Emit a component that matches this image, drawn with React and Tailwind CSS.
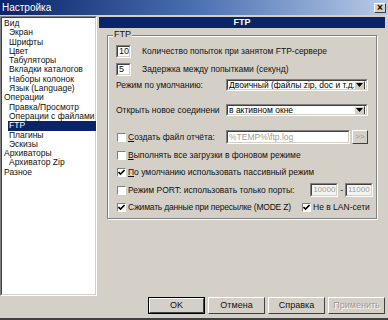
import React from 'react';

const font = { fontFamily: '"Liberation Sans", Arial, "DejaVu Sans", sans-serif' };

const tree = [
  ['Вид', 0],
  ['Экран', 1],
  ['Шрифты', 1],
  ['Цвет', 1],
  ['Табуляторы', 1],
  ['Вкладки каталогов', 1],
  ['Наборы колонок', 1],
  ['Язык (Language)', 1],
  ['Операции', 0],
  ['Правка/Просмотр', 1],
  ['Операции с файлами', 1],
  ['FTP', 1, true],
  ['Плагины', 1],
  ['Эскизы', 1],
  ['Архиваторы', 0],
  ['Архиватор Zip', 1],
  ['Разное', 0],
];

// поле ввода с "вдавленной" рамкой
const Field = ({ className = '', children }) => (
  <div className={`border border-t-[#808080] border-l-[#808080] border-b-white border-r-white ${className}`}>
    <div className="h-full w-full border border-t-[#404040] border-l-[#404040] border-b-[#d4d0c8] border-r-[#d4d0c8] flex items-center px-[1px] overflow-hidden whitespace-nowrap">
      {children}
    </div>
  </div>
);

const Check = ({ checked }) => (
  <div className="w-[9px] h-[9px] shrink-0 bg-white border border-t-[#808080] border-l-[#808080] border-b-white border-r-white flex items-center justify-center">
    {checked && (
      <svg width="7" height="7" viewBox="0 0 7 7">
        <path d="M0.5 3 L2.5 5 L6.5 1" stroke="#000" strokeWidth="1.6" fill="none" />
      </svg>
    )}
  </div>
);

const Raised = ({ className = '', children }) => (
  <div className={`bg-[#d4d0c8] border border-t-white border-l-white border-b-[#404040] border-r-[#404040] flex items-center justify-center ${className}`}>
    {children}
  </div>
);

const Select = ({ text }) => (
  <Field className="w-[142px] h-[12px] bg-white">
    <span className="flex-1 min-w-0 text-[8.5px] leading-none text-black overflow-hidden whitespace-nowrap">{text}</span>
    <Raised className="w-[11px] h-[9px] shrink-0">
      <svg width="7" height="4" viewBox="0 0 7 4">
        <path d="M0 0 H7 L3.5 4 Z" fill="#000" />
      </svg>
    </Raised>
  </Field>
);

const Button = ({ children, def, disabled }) => (
  <div className={`w-[57px] h-[17px] ${def ? 'border border-black' : ''}`}>
    <Raised className="w-full h-full">
      <span className={`text-[9px] ${disabled ? 'text-[#9a978f] [text-shadow:1px_1px_0_#fff]' : 'text-[#111]'}`}>{children}</span>
    </Raised>
  </div>
);

export default function App() {
  return (
    <div className="w-[388px] h-[320px] bg-[#d4d0c8] flex flex-col overflow-hidden" style={font}>
      {/* заголовок окна */}
      <div className="h-[15px] shrink-0 bg-gradient-to-r from-[#0a246a] via-[#4a70b0] to-[#b8cbe8] flex items-center pl-[2px] pr-[2px]">
        <span className="text-white text-[10px] flex-1">Настройка</span>
        <Raised className="w-[12px] h-[10px]">
          <span className="text-[10px] leading-none font-bold text-black">×</span>
        </Raised>
      </div>

      <div className="flex flex-1 min-h-0">
        {/* дерево разделов */}
        <div className="w-[97px] shrink-0 pb-[22px] pt-[1px]">
          <div className="h-full border border-t-[#808080] border-l-[#808080] border-b-white border-r-white">
            <div className="h-full bg-white border border-t-[#404040] border-l-[#404040] border-b-[#d4d0c8] border-r-[#d4d0c8] pt-[1px] pl-[1px] pr-[1px]">
              {tree.map(([t, lvl, sel]) => (
                <div key={t} className={`h-[9.3px] leading-[9.3px] text-[8.5px] whitespace-nowrap ${lvl ? 'pl-[6px]' : 'pl-[1px]'}`}>
                  <span className={sel ? 'bg-[#0a246a] text-white inline-block w-[88px] pl-[1px] -ml-[1px]' : 'text-[#111]'}>{t}</span>
                </div>
              ))}
            </div>
          </div>
        </div>

        {/* правая панель */}
        <div className="flex-1 flex flex-col pl-[2px] pr-[3px] pb-[3px]">
          <div className="h-[11px] mt-[2px] bg-[#0a246a] flex items-center justify-center">
            <span className="text-white text-[9px] font-bold">FTP</span>
          </div>

          <div className="relative ml-[8px] mr-[8px] mt-[7px] h-[184px] border border-[#808080] shadow-[1px_1px_0_#fff,inset_1px_1px_0_#fff]">
            <span className="absolute -top-[6px] left-[5px] bg-[#d4d0c8] px-[1px] text-[9px] leading-none text-[#111]">FTP</span>

            <div className="flex flex-col pl-[8px] pr-[3px] text-[8.5px] text-[#111]">
              <div className="flex items-center h-[13px] mt-[9px]">
                <Field className="w-[15px] h-[13px] bg-white"><span className="text-[9px]">10</span></Field>
                <span className="ml-[11px]">Количество попыток при занятом FTP-сервере</span>
              </div>
              <div className="flex items-center h-[13px] mt-[5px]">
                <Field className="w-[15px] h-[13px] bg-white"><span className="text-[9px]">5</span></Field>
                <span className="ml-[11px]">Задержка между попытками (секунд)</span>
              </div>
              <div className="flex items-center h-[12px] mt-[3px]">
                <span className="w-[110px] whitespace-nowrap">Режим по умолчанию:</span>
                <Select text="Двоичный (файлы zip, doc и т.д.)" />
              </div>
              <div className="flex items-center h-[12px] mt-[13px]">
                <span className="w-[110px] shrink-0 whitespace-nowrap overflow-hidden">Открыть новое соединени</span>
                <Select text="в активном окне" />
              </div>
              <div className="flex items-center h-[14px] mt-[14px]">
                <div className="w-[110px] flex items-center pl-[1px]">
                  <Check />
                  <span className="ml-[2px]"><u>С</u>оздать файл отчёта:</span>
                </div>
                <Field className="w-[124px] h-[14px] bg-white"><span className="text-[8.5px] text-[#a09d96]">%TEMP%\ftp.log</span></Field>
                <Raised className="w-[16px] h-[14px] ml-[2px]">
                  <span className="text-[8px] text-[#9a978f]">&gt;&gt;</span>
                </Raised>
              </div>
              <div className="flex items-center h-[12px] mt-[5px] pl-[1px]">
                <Check />
                <span className="ml-[2px]"><u>В</u>ыполнять все загрузки в фоновом режиме</span>
              </div>
              <div className="flex items-center h-[12px] mt-[5px] pl-[1px]">
                <Check checked />
                <span className="ml-[2px]"><u>П</u>о умолчанию использовать пассивный режим</span>
              </div>
              <div className="flex items-center h-[14px] mt-[5px] pl-[1px]">
                <Check />
                <span className="ml-[2px] flex-1">Режим PORT: использовать только порты:</span>
                <Field className="w-[28px] h-[14px] bg-[#f4f3f0]"><span className="text-[8px] text-[#a09d96]">10000</span></Field>
                <span className="mx-[2px]">-</span>
                <Field className="w-[28px] h-[14px] bg-[#f4f3f0]"><span className="text-[8px] text-[#a09d96]">11000</span></Field>
              </div>
              <div className="flex items-center h-[12px] mt-[4px] pl-[1px]">
                <div className="w-[185px] flex items-center">
                  <Check checked />
                  <span className="ml-[2px] whitespace-nowrap tracking-[-0.2px]">Сжимать данные при пересылке (MODE Z)</span>
                </div>
                <Check checked />
                <span className="ml-[2px] whitespace-nowrap">Не в LAN-сети</span>
              </div>
            </div>
          </div>

          <div className="flex-1" />

          <div className="flex justify-end gap-[3px] mb-[1px]">
            <Button def>OK</Button>
            <Button>Отмена</Button>
            <Button>Справка</Button>
            <Button disabled>Применить</Button>
          </div>
        </div>
      </div>
      <div className="h-[2px] shrink-0 bg-[#404040]" />
    </div>
  );
}
